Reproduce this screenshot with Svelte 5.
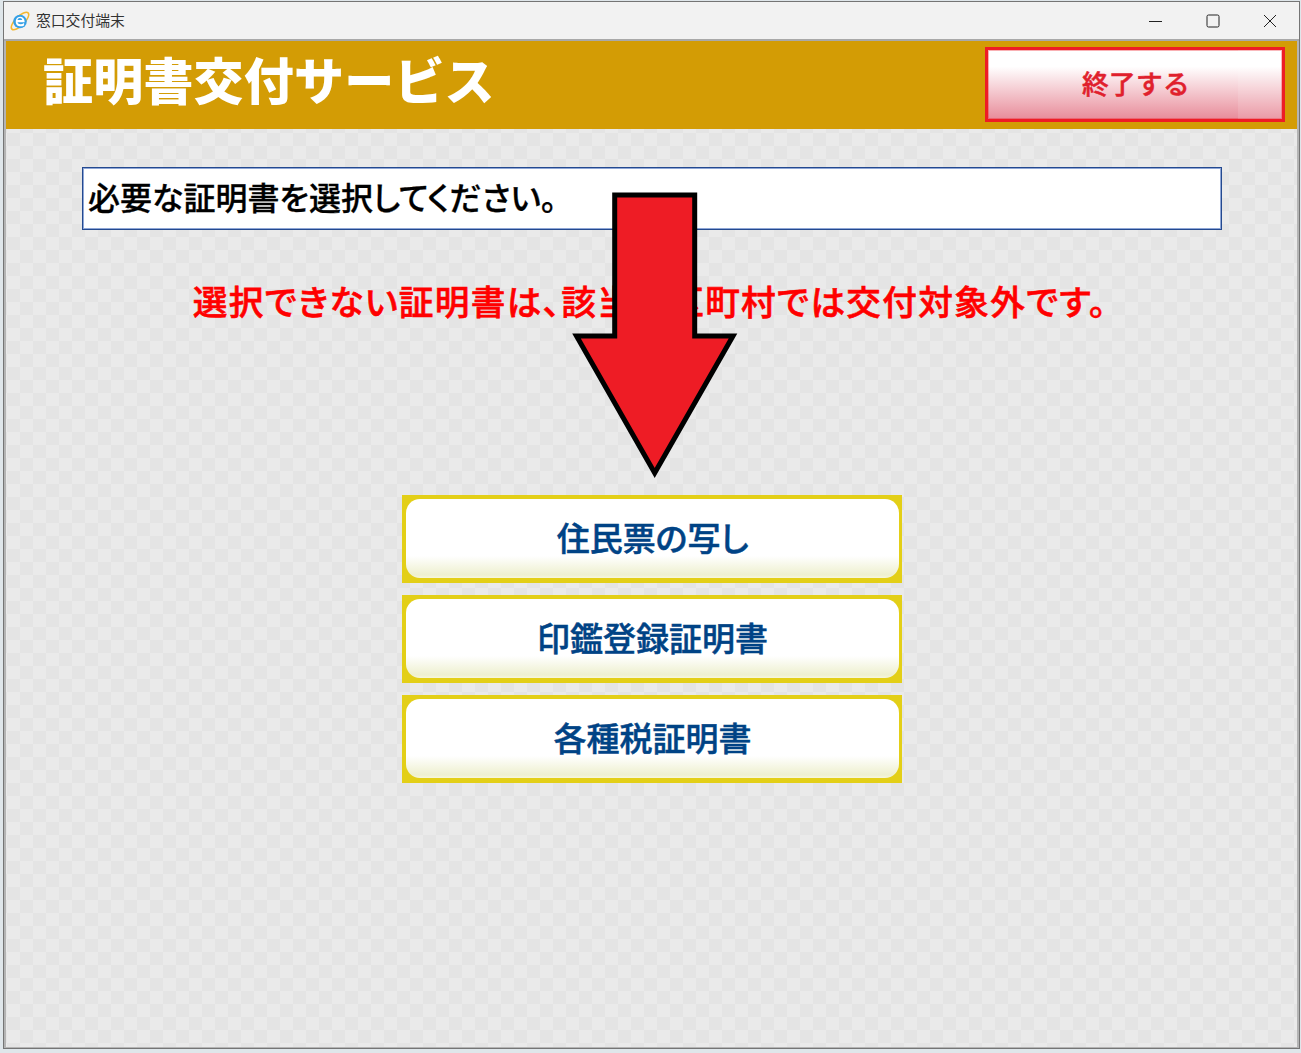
<script lang="ts">
	const certificates = ['住民票の写し', '印鑑登録証明書', '各種税証明書'];
</script>

<div class="window">
	<div class="titlebar">
		<svg class="app-icon" viewBox="0 0 20 20" aria-hidden="true">
			<ellipse cx="10" cy="10" rx="11.500" ry="4.500" transform="rotate(-45 10 10)" fill="none" stroke="#f5b82e" stroke-width="1.500" />
			<circle cx="10" cy="10.500" r="6.800" fill="#35a0e6" />
			<path d="M5.800 9.700c.3-2.500 2.200-4 4.500-4s4.100 1.600 4.300 4.500v1.100H7.500c.4 2 3.800 2.800 6.600.7v2.500c-3.900 2-9 .6-8.300-4.800z" fill="#fff" />
			<path d="M7.500 9h4.700c-.1-1.300-1-2-2.300-2S7.700 7.800 7.500 9z" fill="#35a0e6" />
		</svg>
		<span class="app-name">窓口交付端末</span>
		<div class="controls">
			<svg viewBox="0 0 14 14" aria-hidden="true"><path d="M0 7.500h13" /></svg>
			<svg viewBox="0 0 14 14" aria-hidden="true"><rect x="1" y="1" width="12" height="12" rx="1.500" /></svg>
			<svg viewBox="0 0 14 14" aria-hidden="true"><path d="M1 1l12 12M13 1L1 13" /></svg>
		</div>
	</div>

	<header class="service-header">
		<h1>証明書交付サービス</h1>
		<button class="exit" type="button">終了する</button>
	</header>

	<main class="content">
		<div class="prompt">必要な証明書を選択してください。</div>
		<p class="notice">選択できない証明書は、該当市区町村では交付対象外です。</p>

		<div class="certificates">
			{#each certificates as name}
				<div class="cert-frame">
					<button class="cert" type="button">{name}</button>
				</div>
			{/each}
		</div>
	</main>

	<svg class="arrow" viewBox="0 0 170 290" aria-hidden="true">
		<path d="M46.700 5H126.700V146H165L86.700 283 8.500 146H46.700z" />
	</svg>
</div>

<style>
	:global(body) {
		margin: 0;
		background: #dfe6ea;
	}

	.window {
		position: relative;
		box-sizing: border-box;
		display: flex;
		flex-direction: column;
		width: 1297px;
		height: 1048px;
		margin: 1px 0 0 3px;
		border: 1px solid #757575;
		background: #b4b4b4;
		font-family: 'Noto Sans CJK JP', 'Noto Sans', sans-serif;
	}

	.titlebar {
		display: flex;
		align-items: center;
		flex: none;
		height: 39px;
		padding-left: 6px;
		box-sizing: border-box;
		background: #f2f2f2;
		border-bottom: 2px solid #a9a9a9;
	}

	.app-icon {
		width: 20px;
		height: 20px;
		margin-right: 6px;
		overflow: visible;
	}

	.app-name {
		font-size: 14.800px;
		color: #333;
		line-height: 1;
	}

	.controls {
		display: flex;
		gap: 43px;
		margin-left: auto;
		margin-right: 22px;
	}

	.controls svg {
		width: 14px;
		height: 14px;
		fill: none;
		stroke: #222;
		stroke-width: 1;
	}

	.service-header {
		display: flex;
		align-items: center;
		justify-content: space-between;
		flex: none;
		height: 88px;
		padding: 0 12px 0 37px;
		margin: 0 2px 0 2px;
		background: #d39c05;
	}

	.service-header h1 {
		margin: 0;
		font-size: 50px;
		font-weight: 900;
		letter-spacing: 0.2px;
		line-height: 1;
		color: #fff;
		position: relative;
		top: -7px;
	}

	.exit {
		position: relative;
		width: 300px;
		height: 75px;
		margin-top: -1px;
		padding: 0 0 4px 2px;
		border: 3px solid #ee1c25;
		box-shadow: inset 0 0 0 1px rgba(238, 28, 37, 0.35);
		background: linear-gradient(#fff 24%, #e88c9a);
		color: #e0202c;
		font: 500 26.670px 'Noto Sans CJK JP', sans-serif;
		letter-spacing: 0.4px;
		-webkit-text-stroke: 0.5px #e0202c;
	}

	.exit::after {
		content: '';
		position: absolute;
		top: 0;
		right: 0;
		bottom: 0;
		width: 44px;
		background: rgba(255, 255, 255, 0.12);
	}

	.content {
		flex: 1;
		margin: 0 2px 1px 2px;
		padding: 38px 0 0 76px;
		background-color: #e7e7e7;
		background-image: repeating-conic-gradient(#e4e4e4 0 25%, #eaeaea 0 50%);
		background-size: 26px 26px;
		background-position: 14px 4px;
		box-sizing: border-box;
	}

	.prompt {
		box-sizing: border-box;
		display: flex;
		align-items: center;
		width: 1140px;
		height: 63px;
		padding: 0 0 5px 5px;
		border: 1px solid #24498f;
		box-shadow: inset 0 0 0 1px #8ea6d6;
		background: #fff;
		color: #000;
		font-size: 32px;
		font-weight: 500;
		font-feature-settings: 'palt';
		-webkit-text-stroke: 0.3px #000;
	}

	.notice {
		width: 1136px;
		margin: 46px 0 0;
		text-align: center;
		color: #f00;
		font-size: 34.670px;
		font-weight: 500;
		letter-spacing: 1.300px;
		line-height: 48px;
		font-feature-settings: 'palt';
		-webkit-text-stroke: 0.6px #f00;
	}

	.certificates {
		display: flex;
		flex-direction: column;
		gap: 12px;
		width: 500px;
		margin: 171px 0 0 320px;
	}

	.cert-frame {
		height: 88px;
		padding: 4px 3px 5px 4px;
		box-sizing: border-box;
		background: #e3cf17;
	}

	.cert {
		display: block;
		width: 100%;
		height: 100%;
		padding: 0 0 4px;
		border: none;
		border-radius: 14px;
		background: linear-gradient(#fff 72%, #eef0cf 96%, #f6f6dc);
		color: #004385;
		font: 500 33px 'Noto Sans CJK JP', sans-serif;
		font-feature-settings: 'palt';
		-webkit-text-stroke: 0.5px #004385;
	}

	.arrow {
		position: absolute;
		left: 564px;
		top: 188px;
		width: 170px;
		height: 290px;
	}

	.arrow path {
		fill: #ee1c25;
		stroke: #000;
		stroke-width: 5;
		stroke-linejoin: miter;
		stroke-miterlimit: 4;
	}
</style>
